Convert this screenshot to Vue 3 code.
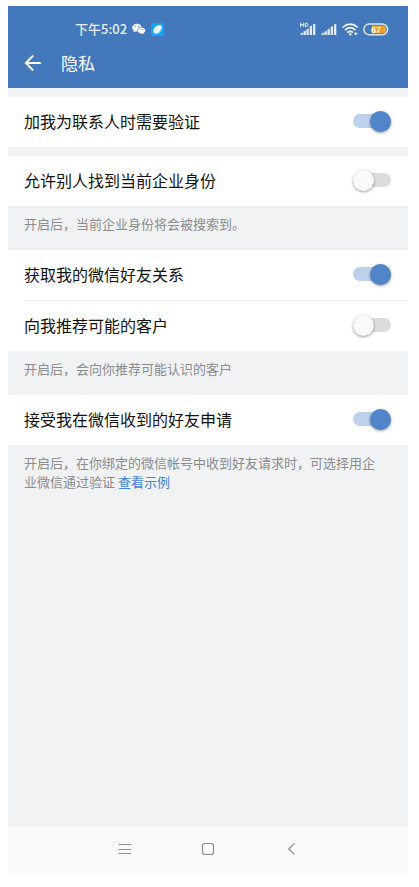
<script setup>
import { reactive } from 'vue'

const groups = reactive([
  { rows: [{ id: 'verify', label: '加我为联系人时需要验证', on: true }] },
  {
    rows: [{ id: 'discover', label: '允许别人找到当前企业身份', on: false }],
    note: '开启后，当前企业身份将会被搜索到。',
  },
  {
    rows: [
      { id: 'friends', label: '获取我的微信好友关系', on: true },
      { id: 'recommend', label: '向我推荐可能的客户', on: false },
    ],
    note: '开启后，会向你推荐可能认识的客户',
  },
  {
    rows: [{ id: 'accept', label: '接受我在微信收到的好友申请', on: true }],
    note: '开启后，在你绑定的微信帐号中收到好友请求时，可选择用企业微信通过验证',
    link: '查看示例',
  },
])
</script>

<template>
  <div class="screen">
    <header class="top">
      <div class="status">
        <span class="time">下午5:02</span>
        <svg class="chat" width="14" height="12" viewBox="0 0 14 12">
          <path d="M5 0.8C2.3 0.8 0.3 2.5 0.3 4.7c0 1.2.7 2.3 1.7 3L1.6 9.2l1.7-.8c.5.2 1.1.2 1.7.2C7.7 8.6 9.6 6.9 9.6 4.7S7.7.8 5 .8Z" fill="#fff" />
          <path d="M9.5 4.2c-2.300 0-4.100 1.500-4.100 3.400S7.200 11 9.500 11c.5 0 .9-.1 1.400-.2l1.400.8-.3-1.400c.9-.6 1.500-1.500 1.500-2.600 0-1.900-1.700-3.400-4-3.400Z" fill="#fff" stroke="#4478bd" stroke-width=".7" />
          <g fill="#4478bd">
            <circle cx="3.4" cy="3.6" r=".6" /><circle cx="6.6" cy="3.6" r=".6" />
            <circle cx="8.2" cy="6.7" r=".5" /><circle cx="10.9" cy="6.7" r=".5" />
          </g>
        </svg>
        <svg class="app" width="13" height="13" viewBox="0 0 13 13">
          <rect width="13" height="13" rx="3" fill="#16a4f8" />
          <path d="M2.4 8.800C2.200 4.700 4.800 2.200 9 2.200c1.300 0 1.900.5 1.700 1.700-.2 4.200-2.500 6.500-6.200 6.700-1.300.1-2-.5-2.100-1.800Z" fill="#f0fbff" />
          <path d="M3.200 10.400c3.700-.3 6-2.300 7.400-6.200.1 4.200-2.300 6.700-5.900 6.700-.8 0-1.200-.2-1.500-.5Z" fill="#8fd9fc" />
        </svg>
        <span class="spacer"></span>
        <svg width="17" height="14" viewBox="0 0 17 14">
          <g fill="none" stroke="#fff" stroke-width=".9">
            <path d="M.7.700v4.200M3.700.700v4.200M.7 2.800h3M5.400 1.100v3.400h.9c1.100 0 1.600-.6 1.600-1.700S7.400 1.100 6.300 1.100Z" />
          </g>
          <path d="M.5 13v-1.500l2.300-1V13ZM3.500 13V9.500l2.300-1V13ZM6.500 13V7.500l2.300-1V13ZM9.700 13V4.500l2.300-1V13ZM13 13V2.500l2.300-1V13Z" fill="#e3ecf7" />
        </svg>
        <svg width="17" height="14" viewBox="0 0 17 14">
          <path d="M.5 13v-1.500l2.300-1V13ZM3.500 13V9.700l2.300-1V13ZM6.500 13V7.500l2.300-1V13ZM9.700 13V5l2.300-1v9ZM13 13V2.500l2.300-1V13Z" fill="#e3ecf7" />
        </svg>
        <svg width="17" height="14" viewBox="0 0 17 14">
          <g fill="none" stroke="#f2f6fb" stroke-width="1.700" stroke-linecap="round">
            <path d="M1.200 5c4-3.800 10-3.800 14 0M3.500 7.700c2.900-2.600 6.500-2.600 9.400 0M5.900 10.200c1.500-1.200 3.100-1.200 4.600 0" />
          </g>
          <circle cx="8.200" cy="12.200" r="1.200" fill="#fff" />
          <path d="M13.800 10.200v3M12.300 11.700h3" stroke="#fff" stroke-width="1" />
        </svg>
        <svg width="26" height="13" viewBox="0 0 26 13">
          <rect x=".9" y="1" width="23.700" height="10.800" rx="5.400" fill="#4478bd" stroke="#dfe7ee" stroke-width="1.500" />
          <path d="M9 2.500h10.300a3.900 3.900 0 0 1 0 7.800H9Z" fill="#eda02d" />
          <text x="13" y="9.600" text-anchor="middle" class="charge">67</text>
        </svg>
      </div>
      <div class="bar">
        <button class="back" type="button" aria-label="返回">
          <svg width="18" height="18" viewBox="0 0 18 18" fill="none" stroke="#fff" stroke-width="1.800">
            <path d="M17 9H2M9.200 1.500 1.800 9l7.400 7.500" />
          </svg>
        </button>
        <h1>隐私</h1>
      </div>
    </header>

    <main class="content">
      <section v-for="(group, i) in groups" :key="i" class="group">
        <div class="rows">
          <label v-for="row in group.rows" :key="row.id" class="row" :for="row.id">
            <span>{{ row.label }}</span>
            <input :id="row.id" v-model="row.on" class="switch" type="checkbox" />
          </label>
        </div>
        <p v-if="group.note" class="note">
          {{ group.note }} <a v-if="group.link" href="#">{{ group.link }}</a>
        </p>
      </section>
    </main>

    <nav class="nav">
      <button type="button" aria-label="菜单">
        <svg width="14" height="14" viewBox="0 0 14 14" fill="none" stroke="#909090" stroke-width="1">
          <path d="M1 2.500h12M1 7.500h12M1 11.500h12" />
        </svg>
      </button>
      <button type="button" aria-label="主页">
        <svg width="14" height="14" viewBox="0 0 14 14" fill="none" stroke="#8c8c8c" stroke-width="1.200">
          <rect x="1.500" y="1.500" width="11" height="11" rx="2.500" />
        </svg>
      </button>
      <button type="button" aria-label="后退">
        <svg width="14" height="14" viewBox="0 0 14 14" fill="none" stroke="#8c8c8c" stroke-width="1.200">
          <path d="M10.500 1.300 4.800 7l5.700 5.700" />
        </svg>
      </button>
    </nav>
  </div>
</template>

<style>
body {
  background: #fff;
}
</style>

<style scoped>
.screen {
  box-sizing: border-box;
  display: flex;
  flex-direction: column;
  min-height: 100vh;
  padding: 6px 11px 14px 8px;
  font-family: "Noto Sans CJK SC", sans-serif;
  color: #111;
}
.top {
  background: #4478bd;
  color: #fff;
  padding: 13px 16px 12px;
}
.status {
  display: flex;
  align-items: center;
  gap: 4px;
  height: 20px;
  padding: 0 3px 0 51px;
}
.time {
  font-size: 13px;
  line-height: 20px;
  font-weight: 500;
  color: #e8eff8;
}
.chat {
  margin-left: 1px;
}
.app {
  margin-left: 1px;
}
.spacer {
  flex: 1;
}
.charge {
  font: bold 9px "Liberation Sans", sans-serif;
  fill: #fff;
}
.bar {
  display: flex;
  align-items: center;
  gap: 19px;
  padding-top: 11px;
}
button {
  display: flex;
  padding: 0;
  border: 0;
  background: none;
  cursor: pointer;
}
h1 {
  margin: 0;
  font-size: 17px;
  line-height: 26px;
  font-weight: 400;
}
.content {
  flex: 1;
  padding-top: 9px;
  background: #f1f2f4;
}
.group:first-child {
  padding-bottom: 9px;
}
.rows {
  background: #fff;
}
.row {
  box-sizing: border-box;
  display: flex;
  align-items: center;
  justify-content: space-between;
  height: 50px;
  margin-left: 16px;
  padding: 0 17px 2px 0;
  font-size: 16px;
  line-height: 24px;
}
.row + .row {
  height: 51px;
  border-top: 1px solid #ebebec;
}
.switch {
  appearance: none;
  display: grid;
  align-items: center;
  width: 38px;
  height: 22px;
  margin: 0;
  cursor: pointer;
}
.switch::before,
.switch::after {
  content: "";
  grid-area: 1 / 1;
}
.switch::before {
  height: 14px;
  border-radius: 7px;
  background: #dcdcdc;
}
.switch::after {
  width: 21px;
  height: 21px;
  border-radius: 50%;
  background: #fafafa;
  box-shadow: 0 1px 3px rgba(0, 0, 0, 0.4);
}
.switch:checked::before {
  background: #bdd1ec;
}
.switch:checked::after {
  justify-self: end;
  background: #5085c9;
}
.note {
  margin: 0;
  padding: 8px 22px 17px 16px;
  font-size: 13px;
  line-height: 19px;
  color: #8b8c8e;
}
.note a {
  color: #3f83d6;
  text-decoration: none;
}
.nav {
  box-sizing: border-box;
  display: flex;
  align-items: center;
  justify-content: center;
  gap: 69px;
  height: 47px;
  padding-bottom: 2px;
  background: #fafafa;
}
</style>
